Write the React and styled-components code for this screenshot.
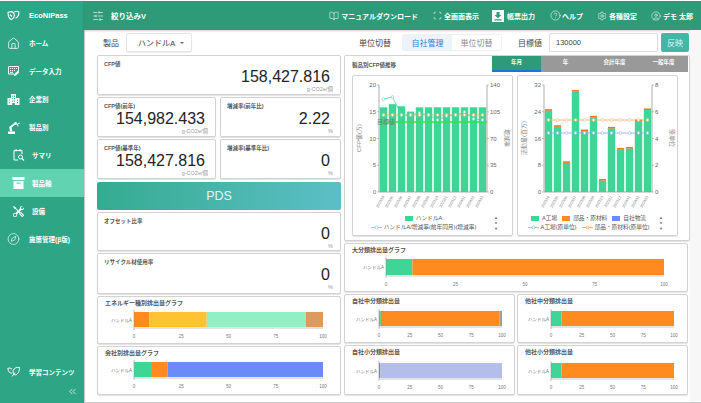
import React from 'react';
import styled, { createGlobalStyle } from 'styled-components';
import {
  BookOpen,
  ChevronsLeft,
  CircleHelp,
  CircleUser,
  Compass,
  House,
  Scan,
  Settings,
  SlidersHorizontal,
} from 'lucide-react';
import { BsTools } from 'react-icons/bs';

const GREEN = '#3ed597';
const ORANGE = '#ff8a1f';
const BLUE = '#6b8cf6';

const GlobalStyle = createGlobalStyle`
  html, body {
    margin: 0;
    padding: 0;
    background: #fff;
  }
  body {
    width: 701px;
    height: 403px;
    overflow: hidden;
    font-family: "Liberation Sans", "Noto Sans CJK JP", sans-serif;
    color: #333;
  }
  * {
    box-sizing: border-box;
  }
`;

const Page = styled.div`
  display: grid;
  grid-template-columns: 84px 617px;
  width: 701px;
  height: 403px;
  padding-top: 1px;
`;

const Sidebar = styled.aside`
  display: flex;
  flex-direction: column;
  height: 402px;
  background: #2ea585;
  color: #fff;
  box-shadow: 1px 0 1px rgba(0, 0, 0, 0.2);
`;

const SideItem = styled.div`
  display: flex;
  align-items: center;
  flex: none;
  height: 28px;
  padding-left: ${(p) => (p.$sub ? 12 : 7)}px;
  font-size: ${(p) => (p.$brand ? 7.5 : 6.5)}px;
  font-weight: 700;
  background: ${(p) => (p.$active ? '#62d3b0' : 'transparent')};
  white-space: nowrap;
`;

const SideIcon = styled.span`
  display: flex;
  align-items: center;
  justify-content: center;
  flex: none;
  width: 13px;
  height: 14px;
  margin-right: ${(p) => (p.$sub ? 7 : 9)}px;
`;

const SideBottom = styled.div`
  margin-top: auto;
`;

const Collapse = styled.div`
  display: flex;
  justify-content: flex-end;
  height: 17px;
  padding-right: 6px;
`;

const Main = styled.main`
  display: flex;
  flex-direction: column;
  height: 402px;
`;

const TopBar = styled.header`
  display: flex;
  align-items: center;
  flex: none;
  height: 29px;
  padding: 0 8px 0 8px;
  background: #2f9a78;
  color: #fff;
  font-size: 7px;
  font-weight: 700;
  box-shadow: 0 1px 2px rgba(0, 0, 0, 0.2);
`;

const FilterButton = styled.div`
  display: flex;
  align-items: center;
  gap: 7px;
  margin-right: auto;
  font-size: 7.5px;
`;

const TopLink = styled.div`
  display: flex;
  align-items: center;
  gap: ${(p) => p.$gap ?? 2}px;
  margin-left: ${(p) => p.$left ?? 15}px;
  white-space: nowrap;
`;

const Body = styled.div`
  display: grid;
  grid-template-columns: 1fr 11px;
  flex: 1;
  min-height: 0;
  border-bottom: 1px solid #ccc;
`;

const Scroll = styled.div`
  background: #f7f7f7;
`;

const Content = styled.div`
  display: flex;
  flex-direction: column;
  min-width: 0;
`;

const FilterRow = styled.div`
  display: flex;
  align-items: center;
  flex: none;
  height: 25px;
  padding-left: 19px;
  font-size: 8px;
  color: #444;
`;

const Select = styled.div`
  display: flex;
  align-items: center;
  justify-content: space-between;
  width: 66px;
  height: 19px;
  margin-left: 7px;
  padding: 0 7px 0 11px;
  border: 1px solid #e6e6e6;
  border-radius: 2px;
  box-shadow: 0 1px 1px rgba(0, 0, 0, 0.08);
`;

const Caret = styled.span`
  width: 0;
  height: 0;
  border-left: 2px solid transparent;
  border-right: 2px solid transparent;
  border-top: 2.5px solid #666;
`;

const FilterLabel = styled.span`
  margin-left: ${(p) => p.$left}px;
  white-space: nowrap;
`;

const Toggle = styled.div`
  display: flex;
  height: 17px;
  margin-left: 11px;
  border: 1px solid #f0f0f0;
  border-radius: 2px;
`;

const ToggleItem = styled.div`
  display: flex;
  align-items: center;
  justify-content: center;
  width: 49px;
  color: ${(p) => (p.$active ? '#2a7fd8' : '#8a8a8a')};
  background: ${(p) => (p.$active ? '#edf3fa' : '#fff')};
`;

const TargetInput = styled.div`
  display: flex;
  align-items: center;
  width: 109px;
  height: 19px;
  margin-left: 7px;
  padding-left: 6px;
  border: 1px solid #ddd;
  border-radius: 2px;
  font-size: 7.5px;
`;

const ApplyButton = styled.div`
  display: flex;
  align-items: center;
  justify-content: center;
  width: 28px;
  height: 19px;
  margin-left: 3px;
  border-radius: 2px;
  background: #45b5a6;
  color: #dffaf3;
`;

const Columns = styled.div`
  display: grid;
  grid-template-columns: 244px 346px;
  column-gap: 3px;
  padding-left: 13px;
`;

const Column = styled.div`
  display: flex;
  flex-direction: column;
  gap: 2px;
`;

const Card = styled.section`
  position: relative;
  flex: none;
  height: ${(p) => p.$h}px;
  width: ${(p) => (p.$w ? `${p.$w}px` : 'auto')};
  background: #fff;
  border: 1px solid #d2d2d2;
  border-radius: 2px;
  box-shadow: 0 1px 1px rgba(0, 0, 0, 0.12);
`;

const Pair = styled.div`
  display: flex;
  justify-content: space-between;
  flex: none;
  width: ${(p) => (p.$w ? `${p.$w}px` : 'auto')};
`;

const MetricLabel = styled.div`
  padding: 4px 0 0 6px;
  height: 12px;
  font-size: 5.5px;
  font-weight: 700;
  color: #555;
  white-space: nowrap;
`;

const MetricValue = styled.div`
  padding-right: 10px;
  height: 17px;
  font-size: 16px;
  line-height: 17px;
  color: #222;
  text-align: right;
`;

const MetricUnit = styled.div`
  margin-top: 1px;
  padding-right: 7px;
  font-size: 5.5px;
  line-height: 7px;
  color: #999;
  text-align: right;
`;

const PdsBanner = styled.div`
  display: flex;
  align-items: center;
  justify-content: center;
  flex: none;
  height: 28px;
  margin-top: 1px;
  border-radius: 2px;
  background: linear-gradient(90deg, #34ab90, #5cbfc6);
  color: #e4f7f3;
  font-size: 12.5px;
`;

const BarTitle = styled.div`
  height: 12px;
  padding: 3px 0 0 7px;
  font-size: 6px;
  line-height: 7px;
  font-weight: 700;
  color: #555;
  white-space: nowrap;
`;

const TrendCard = styled(Card)`
  padding: 0 0 0 7px;
`;

const TrendHead = styled.div`
  display: flex;
  justify-content: space-between;
  align-items: flex-start;
  height: 19px;
  padding-right: 1px;
`;

const TrendTitle = styled.div`
  padding-top: 5px;
  font-size: 5.5px;
  font-weight: 700;
  color: #555;
`;

const Tabs = styled.div`
  display: flex;
  height: 16px;
`;

const Tab = styled.div`
  display: flex;
  align-items: center;
  justify-content: center;
  width: 49px;
  padding-bottom: 2px;
  background: ${(p) => (p.$active ? '#2f9a78' : '#999')};
  border-bottom: 2px solid ${(p) => (p.$active ? '#1976d2' : '#999')};
  color: #fff;
  font-size: 5.5px;
  font-weight: 700;
`;

const ChartRow = styled.div`
  display: flex;
  gap: 4px;
`;

const ChartCard = styled.div`
  width: 161px;
  height: 161px;
  border: 1px solid #d2d2d2;
  border-radius: 2px;
  box-shadow: 0 1px 1px rgba(0, 0, 0, 0.12);
`;

const LegendArea = styled.div`
  display: flex;
  align-items: center;
  height: 20px;
  padding-right: 14px;
`;

const LegendRows = styled.div`
  display: flex;
  flex: 1;
  flex-direction: column;
  align-items: center;
  gap: 2px;
  font-size: 5.7px;
  line-height: 7px;
  color: #555;
`;

const LegendRow = styled.div`
  display: flex;
  align-items: center;
  gap: 5px;
  white-space: nowrap;
`;

const LegendItem = styled.span`
  display: flex;
  align-items: center;
  gap: 2px;
`;

const Swatch = styled.span`
  width: 8px;
  height: 5.5px;
  margin-right: 1px;
  background: ${(p) => p.$color};
`;

const Pager = styled.div`
  display: flex;
  flex-direction: column;
  align-items: center;
  gap: 1.5px;
  font-size: 4px;
  line-height: 4px;
  color: #666;
`;

const ChartSvg = styled.svg`
  display: block;
`;

const ChartText = styled.text`
  font-size: ${(p) => p.$size ?? 6}px;
  fill: ${(p) => p.$fill ?? '#666'};
`;

function LogoMark() {
  return (
    <svg width="13" height="11" viewBox="0 0 13 11" fill="none" stroke="#fff" strokeWidth="1.1">
      <path d="M1 2.5c2.5-1.2 5-.8 6 1 .8 2.2-.2 5.5-2.8 6C2 8.5 1 5.5 1 2.5z" />
      <path d="M12 2c-1.5-1-3.5-.8-4.8.1M11.900 2.200c.1 2.800-1 5-3.400 6" />
      <path d="M3 4.500l2 2" />
    </svg>
  );
}

function DataEntryIcon() {
  return (
    <svg width="13" height="12" viewBox="0 0 13 12" fill="none" stroke="#fff" strokeWidth="1">
      <path d="M7 9H1.500V1.500h10V6" />
      <path d="M3 3.500h1M5 3.500h1M7 3.500h1M9 3.500h1M3 5.500h1M5 5.500h1M7 5.500h1M3 7.300h3" />
      <path d="M7.500 10.500l.4-1.600 3-2.800 1.100 1.100-3 2.800z" fill="#fff" />
    </svg>
  );
}

function BuildingIcon() {
  return (
    <svg width="13" height="13" viewBox="0 0 13 13" fill="#fff">
      <path
        fillRule="evenodd"
        d="M4 1h5v4h3.500v7H.5V5H4zM5.200 2.500v1.300h1V2.500zM7 2.500v1.300h1V2.500zM5.200 5v1.300h1V5zM7 5v1.300h1V5zM1.800 6.500v1.300h1V6.500zM10 6.500v1.300h1V6.500zM5.200 7.500v1.300h1V7.500zM7 7.500v1.300h1V7.500zM1.800 9v1.300h1V9zM10 9v1.300h1V9zM5.200 10v2h2.600v-2z"
      />
    </svg>
  );
}

function RobotArmIcon() {
  return (
    <svg width="13" height="13" viewBox="0 0 13 13" fill="#fff">
      <path d="M1 10.500h7V13H1z" />
      <path d="M3 10.500l-.8-4.500 5.300-4 1 1.300L4.500 6.500l.8 4z" />
      <circle cx="8.500" cy="2.500" r="1.500" />
      <path d="M10 3l2.500-1.500.5.800-2 1.200.5 1.800-1 .3z" />
    </svg>
  );
}

function SummaryIcon() {
  return (
    <svg width="13" height="14" viewBox="0 0 13 14" fill="none" stroke="#fff" strokeWidth="1">
      <path d="M6 12H2V2.500h8V6" />
      <path d="M4 1v2.500M8 1v2.500" />
      <circle cx="8.500" cy="9" r="2" />
      <path d="M10 10.500l2 2" strokeWidth="1.300" />
    </svg>
  );
}

function ArchiveIcon() {
  return (
    <svg width="13" height="12" viewBox="0 0 13 12" fill="#fff">
      <path d="M.5 0h12v3H.5z" />
      <path fillRule="evenodd" d="M1.500 4h10v8h-10zM4.500 5.500v1.200h4V5.500z" />
    </svg>
  );
}

function LeafIcon() {
  return (
    <svg width="13" height="12" viewBox="0 0 13 12" fill="none" stroke="#fff" strokeWidth="1">
      <path d="M.5 2.500c1.800-.8 3.600-.4 4.600.8M12.500 1.500c-2.800-.6-5.500.6-6.300 3-.6 2 .4 4 2 4.500 2.800-.4 4.300-4 4.300-7.500z" />
      <path d="M1 2.800c0 2.400 1.500 4.200 3.800 4.500M5 10.500l3-4" />
    </svg>
  );
}

function DownloadBox() {
  return (
    <svg width="12" height="12" viewBox="0 0 12 12">
      <path d="M0 0h12v12H0z" fill="#fff" />
      <path d="M4.500 2h3v3h2L6 8.300 2.500 5h2zM2.500 9.200h7v1.200h-7z" fill="#2f9a78" />
    </svg>
  );
}

function LineKey({ color }) {
  return (
    <svg width="11" height="5" viewBox="0 0 11 5">
      <line x1="0" x2="11" y1="2.500" y2="2.500" stroke={color} strokeWidth="0.700" />
      <circle cx="5.500" cy="2.500" r="1.500" fill="#fff" stroke={color} strokeWidth="0.600" />
    </svg>
  );
}

const DATES = ['202304', '202305', '202306', '202307', '202308', '202309', '202310', '202311', '202312', '202401', '202402', '202403'];

// plot box is shared by both trend charts
const PLOT = { left: 26, right: 134, top: 9, bottom: 116 };

function ComboChart({ leftTicks, rightTicks, leftTitle, rightTitle, bars, caps, lines, target }) {
  const { left, right, top, bottom } = PLOT;
  const step = (right - left) / bars.length;
  const max = leftTicks[0];
  const y = (v) => bottom - (v / max) * (bottom - top);
  const tickY = (i, n) => top + (i * (bottom - top)) / (n - 1);

  return (
    <ChartSvg width="159" height="137">
      <ChartText
        x="6"
        y="62"
        textAnchor="middle"
        $fill="#888"
        transform="rotate(-90 6 62)"
        dominantBaseline="middle"
      >
        {leftTitle}
      </ChartText>
      <ChartText
        x="154"
        y="62"
        textAnchor="middle"
        $fill="#888"
        transform="rotate(90 154 62)"
        dominantBaseline="middle"
      >
        {rightTitle}
      </ChartText>

      {bars.map((v, i) => {
        const x = left + step * i + 1;
        const w = step - 2;
        return (
          <g key={DATES[i]}>
            <rect x={x - 0.6} y={y(v) - 0.4} width={w + 1.2} height={bottom - y(v) + 0.4} fill="#bdf0da" />
            <rect x={x} y={y(v)} width={w} height={bottom - y(v)} fill={GREEN} />
            {caps && <rect x={x} y={y(v) - 1.6} width={w} height={1.6} fill="#e57c1c" />}
            <ChartText
              $size={3.8}
              $fill="#777"
              textAnchor="end"
              x={x + w / 2 + 1}
              y={bottom + 5}
              transform={`rotate(-60 ${x + w / 2 + 1} ${bottom + 5})`}
            >
              {DATES[i]}
            </ChartText>
          </g>
        );
      })}

      {target && (
        <g>
          <line x1={left} x2={right} y1={target} y2={target} stroke="#35e33a" strokeWidth="1.300" />
          <ChartText $fill="#777" x={left - 2} y={target + 2}>
            目標値
          </ChartText>
        </g>
      )}

      {lines.map((line) => (
        <g key={line.color}>
          <polyline
            fill="none"
            stroke={line.color}
            strokeWidth="0.800"
            points={line.ys.map((v, i) => `${left + step * (i + 0.5)},${v}`).join(' ')}
          />
          {line.ys.map((v, i) => (
            <circle
              key={i}
              cx={left + step * (i + 0.5)}
              cy={v}
              r="1.400"
              fill="#fff"
              stroke={line.color}
              strokeWidth="0.500"
            />
          ))}
        </g>
      ))}

      <path d={`M${left} ${top}V${bottom}H${right}V${top}`} fill="none" stroke="#999" strokeWidth="0.800" />
      {leftTicks.map((t, i) => (
        <g key={t}>
          <line x1={left - 2} x2={left} y1={tickY(i, leftTicks.length)} y2={tickY(i, leftTicks.length)} stroke="#999" strokeWidth="0.600" />
          <ChartText textAnchor="end" x={left - 3} y={tickY(i, leftTicks.length) + 2}>
            {t}
          </ChartText>
        </g>
      ))}
      {rightTicks.map((t, i) => (
        <g key={t}>
          <line x1={right} x2={right + 2} y1={tickY(i, rightTicks.length)} y2={tickY(i, rightTicks.length)} stroke="#999" strokeWidth="0.600" />
          <ChartText x={right + 3} y={tickY(i, rightTicks.length) + 2}>
            {t}
          </ChartText>
        </g>
      ))}
    </ChartSvg>
  );
}

function BarPlot({ width, left, plotWidth, top = 3, barH = 15, segments }) {
  const ticks = [0, 25, 50, 75, 100];
  return (
    <ChartSvg width={width} height="33">
      <line x1={left} x2={left + plotWidth} y1={top - 1} y2={top - 1} stroke="#f0e8b8" strokeWidth="0.500" strokeDasharray="1 1" />
      {segments.map(([from, to, color]) => (
        <rect
          key={color + from}
          x={left + (from / 100) * plotWidth}
          y={top}
          width={((to - from) / 100) * plotWidth}
          height={barH}
          fill={color}
        />
      ))}
      <line x1={left} x2={left + plotWidth} y1={top + barH + 1} y2={top + barH + 1} stroke="#c8c8c8" />
      <line x1={left} x2={left} y1={top - 2} y2={top + barH + 3} stroke="#999" strokeWidth="0.600" />
      <ChartText $size={4.500} $fill="#777" textAnchor="end" x={left - 2} y={top + barH / 2 + 2}>
        ハンドルA
      </ChartText>
      {ticks.map((t) => (
        <ChartText key={t} $size={4.500} $fill="#777" textAnchor="middle" x={left + (t / 100) * plotWidth} y={top + barH + 11}>
          {t}
        </ChartText>
      ))}
    </ChartSvg>
  );
}

function Metric({ label, value, unit, h = 40, w }) {
  return (
    <Card $h={h} $w={w}>
      <MetricLabel>{label}</MetricLabel>
      <MetricValue>{value}</MetricValue>
      <MetricUnit>{unit}</MetricUnit>
    </Card>
  );
}

function BarCard({ title, w, h = 49, plot }) {
  return (
    <Card $h={h} $w={w}>
      <BarTitle>{title}</BarTitle>
      <BarPlot {...plot} />
    </Card>
  );
}

function ChartPager() {
  return (
    <Pager>
      <span>▲</span>
      <span>●</span>
      <span>▼</span>
    </Pager>
  );
}

const OTHER = [[0, 8.500, GREEN], [8.500, 100, ORANGE]];
const UNIT = 'g-CO2e/個';

const NAV = [
  { label: 'ホーム', icon: <House size={13} strokeWidth={1.400} /> },
  { label: 'データ入力', icon: <DataEntryIcon /> },
  { label: '企業別', icon: <BuildingIcon /> },
  { label: '製品別', icon: <RobotArmIcon /> },
  { label: 'サマリ', icon: <SummaryIcon />, sub: true },
  { label: '製品軸', icon: <ArchiveIcon />, sub: true, active: true },
  { label: '設備', icon: <BsTools size={11} />, sub: true },
  { label: '施策管理(β版)', icon: <Compass size={14} strokeWidth={1.200} /> },
];

export default function App() {
  return (
    <Page>
      <GlobalStyle />
      <Sidebar>
        <SideItem $brand>
          <SideIcon>
            <LogoMark />
          </SideIcon>
          EcoNiPass
        </SideItem>
        {NAV.map((item) => (
          <SideItem key={item.label} $sub={item.sub} $active={item.active}>
            <SideIcon $sub={item.sub}>{item.icon}</SideIcon>
            {item.label}
          </SideItem>
        ))}
        <SideBottom>
          <SideItem>
            <SideIcon>
              <LeafIcon />
            </SideIcon>
            学習コンテンツ
          </SideItem>
          <Collapse>
            <ChevronsLeft size={11} strokeWidth={1.600} />
          </Collapse>
        </SideBottom>
      </Sidebar>

      <Main>
        <TopBar>
          <FilterButton>
            <SlidersHorizontal size={12} strokeWidth={1.200} />
            絞り込みV
          </FilterButton>
          <TopLink>
            <BookOpen size={10} strokeWidth={1.300} />
            マニュアルダウンロード
          </TopLink>
          <TopLink $left={15}>
            <Scan size={9} strokeWidth={1.500} />
            全画面表示
          </TopLink>
          <TopLink $left={13} $gap={3}>
            <DownloadBox />
            帳票出力
          </TopLink>
          <TopLink $left={15} $gap={1}>
            <CircleHelp size={11} strokeWidth={1.200} />
            ヘルプ
          </TopLink>
          <TopLink $left={14}>
            <Settings size={10} strokeWidth={1.300} />
            各種設定
          </TopLink>
          <TopLink $left={14}>
            <CircleUser size={10} strokeWidth={1.300} />
            デモ 太郎
          </TopLink>
        </TopBar>

        <Body>
          <Content>
            <FilterRow>
              製品
              <Select>
                ハンドルA
                <Caret />
              </Select>
              <FilterLabel $left={167}>単位切替</FilterLabel>
              <Toggle>
                <ToggleItem $active>自社管理</ToggleItem>
                <ToggleItem>単位切替</ToggleItem>
              </Toggle>
              <FilterLabel $left={16}>目標値</FilterLabel>
              <TargetInput>130000</TargetInput>
              <ApplyButton>反映</ApplyButton>
            </FilterRow>

            <Columns>
              <Column>
                <Metric label="CFP値" value="158,427.816" unit={UNIT} />
                <Pair>
                  <Metric label="CFP値(前年)" value="154,982.433" unit={UNIT} w={119} />
                  <Metric label="増減率(前年比)" value="2.22" unit="%" w={121} />
                </Pair>
                <Pair>
                  <Metric label="CFP値(基準年)" value="158,427.816" unit={UNIT} w={119} />
                  <Metric label="増減率(基準年比)" value="0" unit="%" w={121} />
                </Pair>
                <PdsBanner>PDS</PdsBanner>
                <Metric label="オフセット比率" value="0" unit="%" h={39} />
                <Metric label="リサイクル材使用率" value="0" unit="%" h={41} />
                <BarCard
                  title="エネルギー種別排出量グラフ"
                  h={48}
                  plot={{
                    width: 242,
                    left: 36,
                    plotWidth: 189,
                    segments: [
                      [0, 8, ORANGE],
                      [8, 38.500, '#ffc233'],
                      [38.500, 91, '#90efc5'],
                      [91, 100, '#dd9a5d'],
                    ],
                  }}
                />
                <BarCard
                  title="会社別排出量グラフ"
                  plot={{
                    width: 242,
                    left: 36,
                    plotWidth: 189,
                    segments: [
                      [0, 9.500, GREEN],
                      [9.500, 17.800, ORANGE],
                      [17.800, 100, BLUE],
                    ],
                  }}
                />
              </Column>

              <Column>
                <TrendCard $h={186}>
                  <TrendHead>
                    <TrendTitle>製品別CFP値推移</TrendTitle>
                    <Tabs>
                      <Tab $active>年月</Tab>
                      <Tab>年</Tab>
                      <Tab>会計年度</Tab>
                      <Tab>一般年度</Tab>
                    </Tabs>
                  </TrendHead>
                  <ChartRow>
                    <ChartCard>
                      <ComboChart
                        leftTicks={[20, 15, 10, 5, 0]}
                        rightTicks={[140, 105, 70, 35, 0]}
                        leftTitle="CFP値(万)"
                        rightTitle="増減率"
                        target={46}
                        bars={[15.800, 16.400, 16, 15, 15.800, 15.800, 15.800, 15.800, 15.800, 15.800, 15.800, 15.800]}
                        lines={[
                          { color: '#e0b04a', ys: Array(12).fill(39) },
                          { color: '#4fd0a8', ys: [23, 21, 39, 39, 37, 39, 44, 40, 39, 36, 43, 44] },
                        ]}
                      />
                      <LegendArea>
                        <LegendRows>
                          <LegendRow>
                            <LegendItem>
                              <Swatch $color={GREEN} />
                              ハンドルA
                            </LegendItem>
                          </LegendRow>
                          <LegendRow>
                            <LegendItem>
                              <LineKey color="#4fd0a8" />
                              ハンドルA/増減率(前年同月)(増減率)
                            </LegendItem>
                          </LegendRow>
                        </LegendRows>
                        <ChartPager />
                      </LegendArea>
                    </ChartCard>
                    <ChartCard>
                      <ComboChart
                        leftTicks={[32, 24, 16, 8, 0]}
                        rightTicks={[8, 6, 4, 2, 0]}
                        leftTitle="活動量(百万)"
                        rightTitle="原単位"
                        caps
                        bars={[24.300, 19.500, 8.700, 30, 18.200, 22.300, 3.400, 19, 12.700, 13, 21.200, 24.500]}
                        lines={[
                          { color: '#f0a860', ys: Array(12).fill(44) },
                          { color: '#8aa4f5', ys: Array(12).fill(57) },
                        ]}
                      />
                      <LegendArea>
                        <LegendRows>
                          <LegendRow>
                            <LegendItem>
                              <Swatch $color={GREEN} />
                              A工場
                            </LegendItem>
                            <LegendItem>
                              <Swatch $color={ORANGE} />
                              部品・原材料
                            </LegendItem>
                            <LegendItem>
                              <Swatch $color={BLUE} />
                              自社物流
                            </LegendItem>
                          </LegendRow>
                          <LegendRow>
                            <LegendItem>
                              <LineKey color="#4fd0a8" />
                              A工場(原単位)
                            </LegendItem>
                            <LegendItem>
                              <LineKey color={ORANGE} />
                              部品・原材料(原単位)
                            </LegendItem>
                          </LegendRow>
                        </LegendRows>
                        <ChartPager />
                      </LegendArea>
                    </ChartCard>
                  </ChartRow>
                </TrendCard>

                <BarCard
                  title="大分類排出量グラフ"
                  w={344}
                  plot={{ width: 342, left: 41, plotWidth: 278, barH: 16, segments: [[0, 9.500, GREEN], [9.500, 100, ORANGE]] }}
                />
                <Pair $w={344}>
                  <BarCard
                    title="自社中分類排出量"
                    w={171}
                    plot={{
                      width: 169,
                      left: 34,
                      plotWidth: 123,
                      top: 4,
                      segments: [[0, 1.500, GREEN], [1.500, 98, ORANGE], [98, 100, '#a89c8c']],
                    }}
                  />
                  <BarCard
                    title="他社中分類排出量"
                    w={171}
                    plot={{ width: 169, left: 33, plotWidth: 123, top: 4, segments: OTHER }}
                  />
                </Pair>
                <Pair $w={344}>
                  <BarCard
                    title="自社小分類排出量"
                    w={171}
                    h={50}
                    plot={{
                      width: 169,
                      left: 34,
                      plotWidth: 123,
                      top: 5,
                      segments: [[0, 1, '#7c8a3c'], [1, 100, '#b3bfea']],
                    }}
                  />
                  <BarCard
                    title="他社小分類排出量"
                    w={171}
                    h={50}
                    plot={{ width: 169, left: 33, plotWidth: 123, top: 5, segments: OTHER }}
                  />
                </Pair>
              </Column>
            </Columns>
          </Content>
          <Scroll />
        </Body>
      </Main>
    </Page>
  );
}
